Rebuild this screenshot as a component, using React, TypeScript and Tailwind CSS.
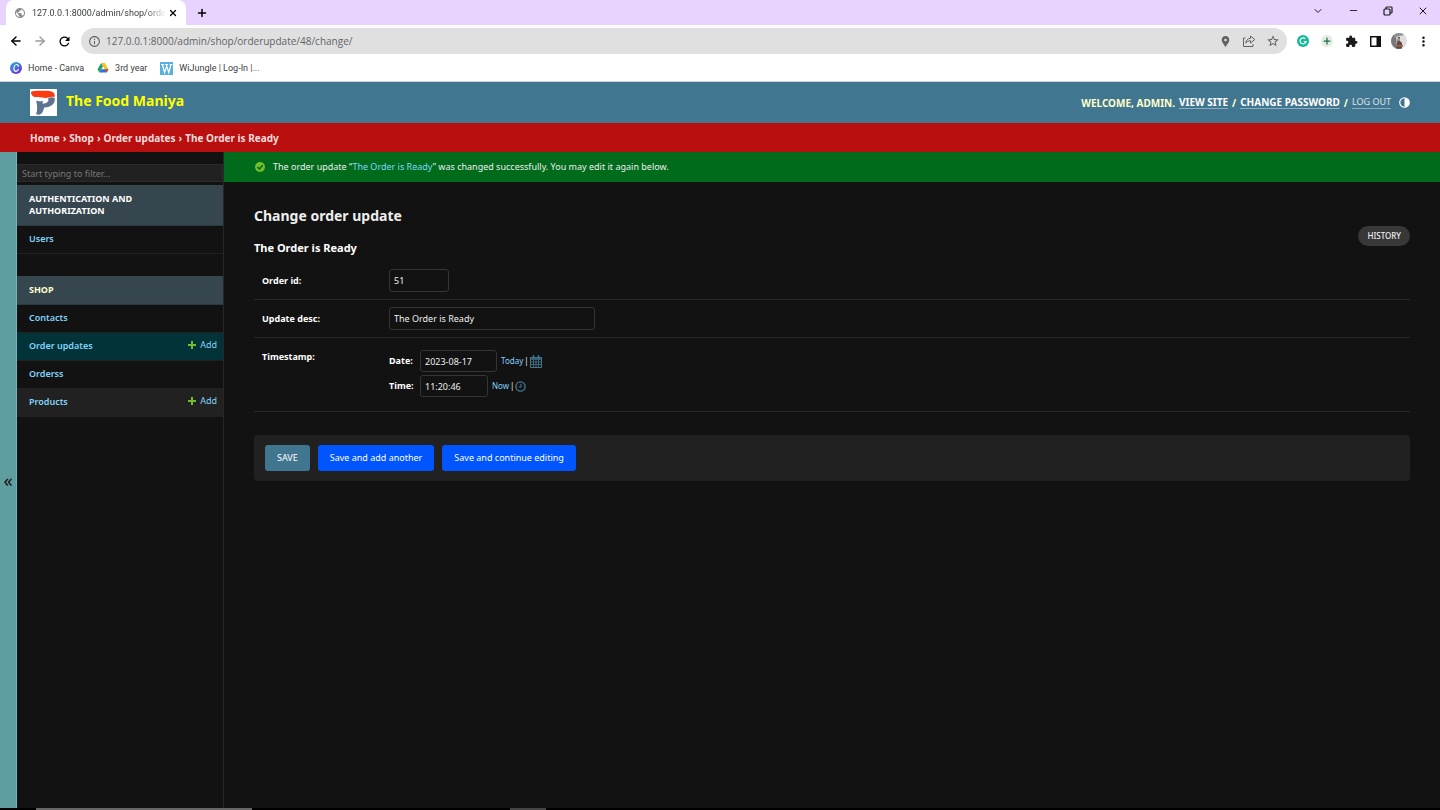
import type { ReactNode } from "react";
import { ArrowLeft, ArrowRight, ChevronDown, Minus, Plus, X } from "lucide-react";
import {
  MdExtension,
  MdInfoOutline,
  MdLocationPin,
  MdMoreVert,
  MdPublic,
  MdRefresh,
  MdStarBorder,
} from "react-icons/md";

const extensionBtn = "flex size-6 items-center justify-center";

function CanvaIcon() {
  return (
    <svg viewBox="0 0 12 12" className="size-3">
      <defs>
        <linearGradient id="canva" x1="0" y1="0" x2="0.6" y2="1">
          <stop offset="0" stopColor="#1fb5d8" />
          <stop offset="1" stopColor="#6a35e0" />
        </linearGradient>
      </defs>
      <circle cx="6" cy="6" r="6" fill="url(#canva)" />
      <path
        d="M8.200 4.400c.2-1.200-.4-1.900-1.300-1.900C5.200 2.500 3.900 4.500 3.900 6.500 3.900 8.200 4.800 9.300 6 9.300c1 0 1.800-.7 2.300-1.700"
        fill="none"
        stroke="#fff"
        strokeWidth="1.200"
        strokeLinecap="round"
      />
    </svg>
  );
}

function DriveIcon() {
  return (
    <svg viewBox="0 0 24 22" className="h-[10px] w-3">
      <path d="M8 0 0 14l4 7 8-14z" fill="#1fa463" />
      <path d="M8 0h8l8 14h-8z" fill="#fbc116" />
      <path d="M8 14h16l-4 7H4z" fill="#2f6fe0" />
      <path d="m16 14h8l-4 7z" fill="#ea4335" />
    </svg>
  );
}

function WiJungleIcon() {
  return (
    <svg viewBox="0 0 13 13" className="size-[13px]">
      <rect width="13" height="13" fill="#58b0dc" />
      <path
        d="M1 2.500h3M5 2.500h3M9.500 2.500h3M2.500 2.500l2 8L6.800 4M6.300 2.500l2.500 8L11 2.500"
        fill="none"
        stroke="#fff"
        strokeWidth="1.200"
      />
    </svg>
  );
}

function FoodManiyaLogo() {
  return (
    <svg viewBox="0 0 27 27" className="size-[27px]">
      <rect width="27" height="27" fill="#fff" />
      <path
        d="M1 3C3 1.600 8 1.800 13 1.800c5-.1 9.500.2 11 2.400.8 1.300.9 2.600.5 4-1.500-.6-3.200-.6-5 .1-2.700 1-4.500.9-7.500.3C8.500 8 6.500 8.600 4 7.800 2 7 1 5.200 1 3z"
        fill="#fb3b12"
      />
      <path
        d="M24.700 9c.9 5.500-3.200 9.300-10.500 9.500-1 3.500-1.800 6-4.200 6.900-1.500.5-3 .1-4-.4 1.500-3 1.600-7.500.2-13.500 2 1 4.300.9 6.800.2l-.6 2.900c3.300 0 5.600-1.200 6-3.200.1-.9-.1-1.500-.5-2 2.400-1.400 5-1.600 6.800-.4z"
        fill="#5d7391"
      />
    </svg>
  );
}

function ShareIcon() {
  return (
    <svg viewBox="0 0 14 14" className="size-[14px]" fill="none" stroke="#5f6368">
      <path d="M3.500 4H1.500v8.500h9.500V10" />
      <path d="M8.500 2v2.200C5.500 4.500 4 6.500 3.800 9.200c1-1.700 2.600-2.400 4.700-2.400V9L12.800 5.500z" strokeLinejoin="round" />
    </svg>
  );
}

function RestoreIcon() {
  return (
    <svg viewBox="0 0 10 10" className="size-[10px]" fill="none" stroke="#1b1b1b" strokeWidth="1.200">
      <rect x="1" y="3" width="6" height="6" rx="1" />
      <path d="M3 3V1.800c0-.5.300-.8.800-.8h4.400c.5 0 .8.300.8.800v4.400c0 .5-.3.800-.8.800H7" />
    </svg>
  );
}

function AvatarIcon() {
  return (
    <svg viewBox="0 0 16 16" className="size-4">
      <clipPath id="avatar">
        <circle cx="8" cy="8" r="8" />
      </clipPath>
      <g clipPath="url(#avatar)">
        <rect width="16" height="16" fill="#dcdedf" />
        <path d="M0 2h5l1 14H0z" fill="#77797b" />
        <path d="M3 0h10v2L8 3 3 5z" fill="#8d9092" />
        <path d="M7 4h2v4l2 2v6H5l1-6z" fill="#5f4c49" />
        <rect x="7" y="5" width="2" height="3" fill="#b08c7c" />
        <path d="M5 12h7v1.500H5z" fill="#a5613e" />
      </g>
    </svg>
  );
}

function AddIcon() {
  return (
    <svg viewBox="0 0 8 8" className="mb-px size-2">
      <path d="M4 0v8M0 4h8" stroke="#70bf2b" strokeWidth="2" />
    </svg>
  );
}

function CalendarIcon() {
  return (
    <svg viewBox="0 0 12 13" className="h-[13px] w-3" fill="none" stroke="#417690">
      <path d="M.5 2.500h11v10H.5z" />
      <path d="M.5 4h11" strokeWidth="1.500" />
      <path d="M3.500 4.500v8M6 4.500v8M8.500 4.500v8M.5 7h11M.5 9.500h11" strokeWidth=".8" />
      <path d="M3.500 .3v3M8.500 .3v3" strokeWidth="1.600" />
    </svg>
  );
}

function ClockIcon() {
  return (
    <svg viewBox="0 0 12 12" className="size-[11px]" fill="none" stroke="#417690" strokeWidth="1.500">
      <circle cx="6" cy="6" r="5" />
      <path d="M6.500 3v3.500H4" strokeWidth="1.200" />
    </svg>
  );
}

function BrowserChrome() {
  return (
    <div className="bg-white font-['Open_Sans','Noto_Sans',sans-serif] text-[#3c4043]">
      <div className="flex h-[25px] items-stretch bg-[#e8d3fe]">
        <div className="ml-[6px] flex w-[180px] items-center rounded-t-lg bg-white px-2">
          <MdPublic className="mr-[6px] size-3 shrink-0 text-[#8a8d91]" />
          <span className="mask-r-from-85% font-['Roboto',sans-serif] text-[9px] whitespace-nowrap">
            127.0.0.1:8000/admin/shop/orde
          </span>
          <button aria-label="Close tab" className="ml-auto">
            <X className="size-[10px] text-black" strokeWidth={3} />
          </button>
        </div>
        <button aria-label="New tab" className="ml-[10px]">
          <Plus className="size-3 text-black" strokeWidth={3} />
        </button>
        <div className="ml-auto flex items-center gap-6 pr-[11px] pb-1 text-[#1b1b1b]">
          <button aria-label="Search tabs">
            <ChevronDown className="size-3" strokeWidth={2} />
          </button>
          <button aria-label="Minimize">
            <Minus className="size-[11px]" strokeWidth={2} />
          </button>
          <button aria-label="Restore">
            <RestoreIcon />
          </button>
          <button aria-label="Close">
            <X className="size-3" strokeWidth={2} />
          </button>
        </div>
      </div>

      <div className="flex h-8 items-center pl-1">
        <button aria-label="Back" className={extensionBtn}>
          <ArrowLeft className="size-[14px] text-black" strokeWidth={2.5} />
        </button>
        <button aria-label="Forward" className={extensionBtn}>
          <ArrowRight className="size-[14px] text-[#9a9a9a]" strokeWidth={2.5} />
        </button>
        <button aria-label="Reload" className={extensionBtn}>
          <MdRefresh className="size-[15px] text-black" />
        </button>
        <div className="ml-[5px] flex h-[26px] flex-1 items-center rounded-full bg-[#e0e0e0] px-[7px]">
          <MdInfoOutline className="size-[13px] text-[#5f6368]" />
          <input
            aria-label="Address"
            defaultValue="127.0.0.1:8000/admin/shop/orderupdate/48/change/"
            className="ml-[5px] flex-1 bg-transparent text-[10px] text-[#5f6368] outline-none"
          />
          <div className="flex items-center gap-[10px] text-[#5f6368]">
            <MdLocationPin className="size-[13px]" />
            <ShareIcon />
            <MdStarBorder className="size-[14px]" />
          </div>
        </div>
        <div className="ml-1 flex items-center pr-[5px]">
          <button aria-label="Grammarly" className={extensionBtn}>
            <svg viewBox="0 0 12 12" className="size-3">
              <circle cx="6" cy="6" r="6" fill="#15b89a" />
              <path
                d="M8.300 3.800A3 3 0 1 0 9 6.500H6.800"
                fill="none"
                stroke="#fff"
                strokeWidth="1.200"
              />
            </svg>
          </button>
          <button aria-label="Add-on" className={extensionBtn}>
            <span className="flex size-3 items-center justify-center rounded-full bg-[#e3ebe3]">
              <Plus className="size-[10px] text-[#17733f]" strokeWidth={3} />
            </span>
          </button>
          <button aria-label="Extensions" className={extensionBtn}>
            <MdExtension className="size-[13px] text-[#1b1b1b]" />
          </button>
          <button aria-label="Side panel" className={extensionBtn}>
            <svg viewBox="0 0 11 11" className="size-[11px]">
              <path d="M0 0h11v11H0zM1.500 1.500v8H6.500v-8z" fillRule="evenodd" fill="#111" />
            </svg>
          </button>
          <button aria-label="Profile" className={extensionBtn}>
            <AvatarIcon />
          </button>
          <button aria-label="Menu" className={extensionBtn}>
            <MdMoreVert className="size-[15px] text-[#1b1b1b]" />
          </button>
        </div>
      </div>

      <nav className="flex h-[25px] items-center gap-[13px] border-b border-[#c9d3da] pb-[2px] pl-[10px] font-['Roboto',sans-serif] text-[9px]">
        <a href="#canva" className="flex items-center gap-[6px]">
          <CanvaIcon />
          Home - Canva
        </a>
        <a href="#drive" className="flex items-center gap-[6px]">
          <DriveIcon />
          3rd year
        </a>
        <a href="#wijungle" className="flex items-center gap-[6px]">
          <WiJungleIcon />
          WiJungle | Log-In |...
        </a>
      </nav>
    </div>
  );
}

function Header() {
  const link = "border-b border-white/40 leading-3 text-white";
  return (
    <header className="flex h-[41px] items-center bg-[#417690] px-[30px]">
      <FoodManiyaLogo />
      <h1 className="ml-[9px] pb-1 text-[14px] font-bold text-[#ffff00]">The Food Maniya</h1>
      <div className="ml-auto flex items-center gap-1 text-[10px] font-bold text-[#ffffcc] uppercase">
        <span>Welcome, Admin.</span>
        <a href="#site" className={link}>View site</a>
        <span>/</span>
        <a href="#password" className={link}>Change password</a>
        <span>/</span>
        <button className="border-b border-white/40 text-[9px] leading-3 font-normal text-white/80 uppercase">
          Log out
        </button>
        <button aria-label="Toggle theme" className="ml-1">
          <svg viewBox="0 0 12 12" className="size-[11px]">
            <circle cx="6" cy="6" r="5.200" fill="none" stroke="#fff" strokeWidth="1.300" />
            <path d="M6 1a5 5 0 0 1 0 10z" fill="#fff" />
          </svg>
        </button>
      </div>
    </header>
  );
}

const apps = [
  {
    name: "Authentication and Authorization",
    heading: "text-white",
    models: [{ name: "Users", add: false, row: "bg-[#121212]" }],
  },
  {
    name: "Shop",
    heading: "text-[#ffffcc]",
    models: [
      { name: "Contacts", add: false, row: "bg-[#121212]" },
      { name: "Order updates", add: true, row: "bg-[#013338]" },
      { name: "Orderss", add: false, row: "bg-[#121212]" },
      { name: "Products", add: true, row: "bg-[#212121]" },
    ],
  },
];

function Sidebar() {
  return (
    <nav className="w-[207px] shrink-0 border-r border-[#272727] pt-3">
      <input
        type="search"
        aria-label="Filter navigation items"
        placeholder="Start typing to filter..."
        className="block h-[18px] w-full border border-[#2b2b2b] bg-[#212121] px-1 outline-none placeholder:text-[#777]"
      />
      <div className="mt-[3px] flex flex-col gap-[22px]">
        {apps.map((app) => (
          <section key={app.name}>
            <h2
              className={`border-b border-[#2b3a42] bg-[#35464f] py-2 pr-10 pl-3 leading-3 font-bold uppercase ${app.heading}`}
            >
              {app.name}
            </h2>
            {app.models.map((model) => (
              <div
                key={model.name}
                className={`flex h-7 items-center justify-between border-b border-[#222] pr-[6px] pb-px pl-3 text-[#81d4fa] ${model.row}`}
              >
                <a href={`#${model.name}`} className="font-semibold">{model.name}</a>
                {model.add && (
                  <a href={`#add-${model.name}`} className="flex items-center gap-1 pb-[2px]">
                    <AddIcon />
                    Add
                  </a>
                )}
              </div>
            ))}
          </section>
        ))}
      </div>
    </nav>
  );
}

const field = "rounded-[3px] border border-[#353535] bg-[#121212] px-1 text-[#eee] outline-none";

function FormRow({ id, label, children }: { id: string; label: string; children: ReactNode }) {
  return (
    <div className="flex items-center border-b border-[#272727] px-2 py-[7px]">
      <label htmlFor={id} className="w-[127px] font-bold text-white">{label}</label>
      {children}
    </div>
  );
}

function ChangeForm() {
  return (
    <form>
      <FormRow id="order-id" label="Order id:">
        <input id="order-id" defaultValue="51" className={`h-[23px] w-[60px] ${field}`} />
      </FormRow>
      <FormRow id="update-desc" label="Update desc:">
        <input id="update-desc" defaultValue="The Order is Ready" className={`h-[23px] w-[206px] ${field}`} />
      </FormRow>
      <div className="flex border-b border-[#272727] px-2 pt-3 pb-[14px]">
        <span className="w-[127px] font-bold text-white">Timestamp:</span>
        <div className="flex flex-col gap-[3px]">
          <div className="flex items-center">
            <label htmlFor="date" className="w-[31px] font-bold text-white">Date:</label>
            <input id="date" defaultValue="2023-08-17" className={`h-[22px] w-[77px] ${field}`} />
            <span className="ml-1 flex items-center gap-px text-[8px]">
              <a href="#today" className="text-[#81d4fa]">Today</a>
              <span>|</span>
              <button type="button" aria-label="Choose a date">
                <CalendarIcon />
              </button>
            </span>
          </div>
          <div className="flex items-center">
            <label htmlFor="time" className="w-[31px] font-bold text-white">Time:</label>
            <input id="time" defaultValue="11:20:46" className={`h-[22px] w-[68px] ${field}`} />
            <span className="ml-1 flex items-center gap-px text-[8px]">
              <a href="#now" className="text-[#81d4fa]">Now</a>
              <span>|</span>
              <button type="button" aria-label="Choose a time">
                <ClockIcon />
              </button>
            </span>
          </div>
        </div>
      </div>

      <div className="mt-[23px] flex gap-2 rounded bg-[#212121] px-[11px] py-[10px] text-white">
        <button type="button" className="h-[26px] rounded-[3px] bg-[#417690] px-3 uppercase">Save</button>
        <button type="button" className="h-[26px] rounded-[3px] bg-[#0055ff] px-3">Save and add another</button>
        <button type="button" className="h-[26px] rounded-[3px] bg-[#0055ff] px-3">Save and continue editing</button>
      </div>
    </form>
  );
}

export default function App() {
  return (
    <div className="flex min-h-screen flex-col bg-[#121212] font-['Noto_Sans','Open_Sans',sans-serif] text-[9px] leading-[14px] text-[#eee]">
      <BrowserChrome />
      <Header />
      <nav className="flex h-[29px] items-center gap-[3px] bg-[#ba0f0f] px-[30px] text-[10px] font-bold text-[#f5dddd]">
        <a href="#home">Home</a>
        <span>›</span>
        <a href="#shop">Shop</a>
        <span>›</span>
        <a href="#updates">Order updates</a>
        <span>›</span>
        <span>The Order is Ready</span>
      </nav>

      <div className="flex flex-1">
        <button
          aria-label="Toggle navigation"
          className="w-[17px] shrink-0 border-r border-[#79b3b5] bg-[#5f9ea0] text-[18px] text-[#111]"
        >
          «
        </button>
        <Sidebar />
        <main className="flex-1">
          <p className="flex h-[30px] items-center bg-[#006b1b] pl-[31px]">
            <svg viewBox="0 0 10 10" className="mr-2 size-[10px]">
              <circle cx="5" cy="5" r="5" fill="#70bf2b" />
              <path d="m2.500 5 2 2 3.200-3.700" fill="none" stroke="#0a5a1b" strokeWidth="1.400" />
            </svg>
            <span>
              The order update “<a href="#order" className="text-[#81d4fa]">The Order is Ready</a>” was changed
              successfully. You may edit it again below.
            </span>
          </p>
          <div className="px-[30px] pt-6">
            <h1 className="text-[14px] leading-5 font-bold">Change order update</h1>
            <div className="flex items-start justify-between">
              <h2 className="pt-[14px] pb-[6px] text-[11px] leading-4 font-bold text-white">The Order is Ready</h2>
              <a
                href="#history"
                className="flex h-5 items-center rounded-full bg-[#383838] px-[9px] text-[8px] font-medium uppercase"
              >
                History
              </a>
            </div>
            <ChangeForm />
          </div>
        </main>
      </div>
      <footer className="flex h-[2px] bg-black pl-9">
        <div className="w-[216px] bg-[#666]" />
        <div className="ml-[258px] w-9 bg-[#444]" />
      </footer>
    </div>
  );
}
